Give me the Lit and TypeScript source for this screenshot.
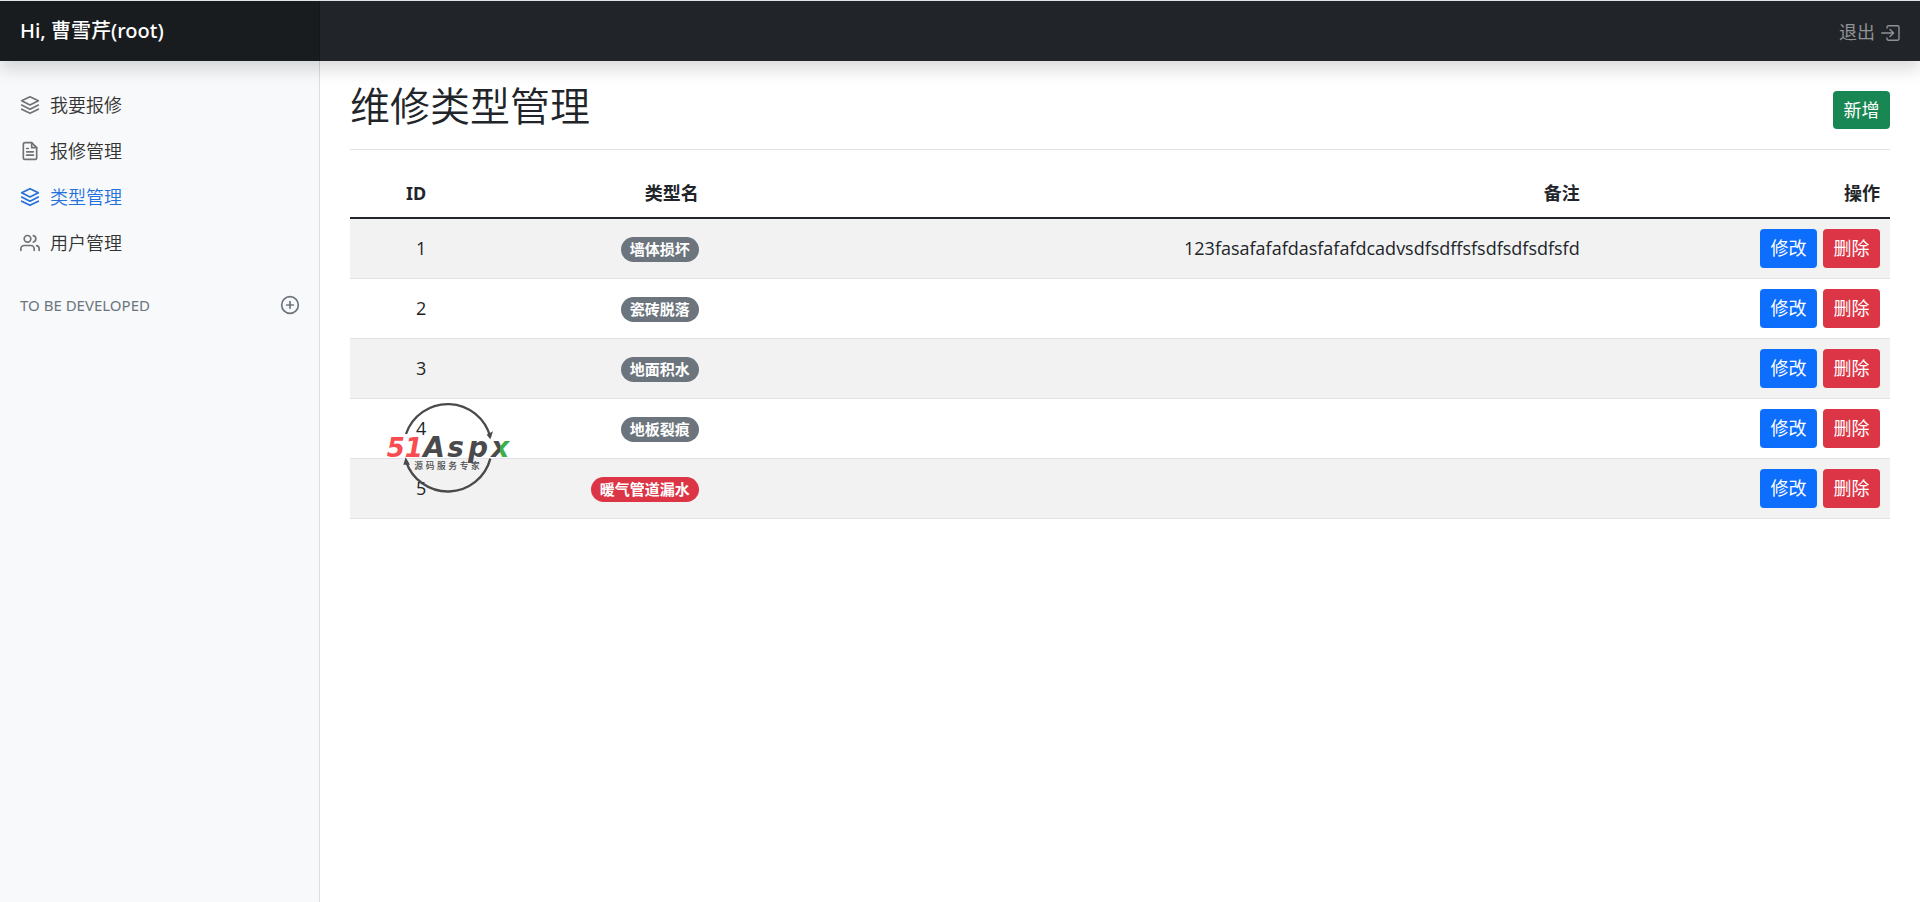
import { LitElement, html, css, svg } from "lit";
import { customElement } from "lit/decorators.js";

const ICONS = {
  layers: svg`<polygon points="12 2 2 7 12 12 22 7 12 2"></polygon><polyline points="2 17 12 22 22 17"></polyline><polyline points="2 12 12 17 22 12"></polyline>`,
  file: svg`<path d="M14 2H6a2 2 0 0 0-2 2v16a2 2 0 0 0 2 2h12a2 2 0 0 0 2-2V8z"></path><polyline points="14 2 14 8 20 8"></polyline><line x1="16" y1="13" x2="8" y2="13"></line><line x1="16" y1="17" x2="8" y2="17"></line><polyline points="10 9 9 9 8 9"></polyline>`,
  users: svg`<path d="M17 21v-2a4 4 0 0 0-4-4H5a4 4 0 0 0-4 4v2"></path><circle cx="9" cy="7" r="4"></circle><path d="M23 21v-2a4 4 0 0 0-3-3.87"></path><path d="M16 3.13a4 4 0 0 1 0 7.75"></path>`,
  plus: svg`<circle cx="12" cy="12" r="10"></circle><line x1="12" y1="8" x2="12" y2="16"></line><line x1="8" y1="12" x2="16" y2="12"></line>`,
};

type IconName = keyof typeof ICONS;

const NAV: { icon: IconName; label: string; active?: boolean }[] = [
  { icon: "layers", label: "我要报修" },
  { icon: "file", label: "报修管理" },
  { icon: "layers", label: "类型管理", active: true },
  { icon: "users", label: "用户管理" },
];

const ROWS = [
  { id: 1, name: "墙体损坏", note: "123fasafafafdasfafafdcadvsdfsdffsfsdfsdfsdfsfd" },
  { id: 2, name: "瓷砖脱落", note: "" },
  { id: 3, name: "地面积水", note: "" },
  { id: 4, name: "地板裂痕", note: "" },
  { id: 5, name: "暖气管道漏水", note: "", urgent: true },
];

@customElement("app-root")
export class AppRoot extends LitElement {
  static styles = css`
    :host {
      display: flex;
      flex-direction: column;
      min-height: 100vh;
      position: relative;
      background: #fff;
      color: #212529;
      font: 18px/27px "Noto Sans", "Noto Sans CJK SC", sans-serif;
    }
    *, *::before, *::after { box-sizing: border-box; }
    a { text-decoration: none; }
    .icon {
      width: 20px;
      height: 20px;
      flex: none;
      fill: none;
      stroke: currentColor;
      stroke-width: 2;
      stroke-linecap: round;
      stroke-linejoin: round;
    }
    .topbar {
      display: flex;
      align-items: stretch;
      height: 61px;
      border-top: 1px solid #dfe7e6;
      background: #212529;
      box-shadow: 0 8px 16px rgba(0, 0, 0, 0.15);
      z-index: 2;
    }
    .brand {
      width: 16.6667%;
      padding: 16px 20px;
      font-size: 20px;
      font-weight: 500;
      line-height: 27px;
      color: #fff;
      background: #191c1f;
      border-right: 1px solid #141619;
    }
    .logout {
      display: flex;
      align-items: center;
      gap: 6px;
      margin-left: auto;
      padding: 2px 20px 0 0;
      color: #909294;
    }
    .exit {
      width: 19px;
      height: 16px;
      margin-top: 2px;
      fill: none;
      stroke: currentColor;
      stroke-linecap: round;
      stroke-linejoin: round;
    }
    .body { display: flex; flex: 1; }
    .sidebar {
      width: 16.6667%;
      padding: 21px 0;
      background: #f8f9fa;
      border-right: 1px solid #dcdddf;
    }
    .nav { list-style: none; margin: 0; padding: 0; }
    .link {
      display: flex;
      align-items: center;
      gap: 10px;
      padding: 10px 20px;
      font-weight: 350;
      line-height: 26px;
      color: #333;
    }
    .link .icon { color: #727272; }
    .link.active, .link.active .icon { color: #2470dc; }
    .section {
      display: flex;
      align-items: center;
      justify-content: space-between;
      margin: 28px 0 0;
      padding: 0 19px 0 20px;
      font-size: 15px;
      font-weight: 400;
      line-height: 22px;
      color: #6c757d;
    }
    .section a { display: flex; color: inherit; }
    .main { flex: 1; min-width: 0; padding: 20px 30px; }
    .head {
      display: flex;
      align-items: center;
      justify-content: space-between;
      padding-bottom: 14px;
      margin-bottom: 20px;
      border-bottom: 1px solid #dee2e6;
    }
    h1 {
      margin: 0;
      padding-bottom: 4px;
      font-size: 40px;
      line-height: 50px;
      font-weight: 350;
    }
    button {
      height: 39px;
      min-width: 57px;
      padding: 0 10px;
      border: 0;
      border-radius: 4px;
      font: inherit;
      line-height: 27px;
      color: #fff;
      background: #0d6efd;
      cursor: pointer;
    }
    .add { height: 38px; margin-top: 4px; background: #198754; }
    .del { background: #dc3545; }
    table { width: 100%; border-collapse: collapse; table-layout: fixed; }
    th, td { padding: 10px; text-align: right; vertical-align: middle; }
    th { font-weight: 700; border-bottom: 2px solid #212529; }
    td {
      height: 60px;
      border-bottom: 1px solid #dee2e6;
      font-family: "Open Sans", "Noto Sans CJK SC", sans-serif;
    }
    tbody tr:nth-child(odd) { background: #f2f2f2; }
    .c-id { width: 5.6%; }
    .c-name { width: 17.7%; }
    .c-act { width: 19.5%; }
    .actions { display: flex; justify-content: flex-end; gap: 6px; }
    .badge {
      display: inline-block;
      padding: 0 9px;
      border-radius: 13px;
      font-size: 15px;
      font-weight: 700;
      line-height: 25px;
      vertical-align: middle;
      color: #fff;
      background: #6c757d;
    }
    .badge.urgent { background: #dc3545; }
    .mark {
      position: absolute;
      left: 380px;
      top: 398px;
      width: 140px;
      height: 100px;
      pointer-events: none;
    }
    .ring { fill: none; stroke: #4a4a4c; stroke-width: 7; }
    .dark { fill: #4a4a4c; }
    .red { fill: #f94c50; }
    .logo { font: italic 700 78px "DejaVu Sans", sans-serif; }
    .letters { font-size: 84px; }
    .slogan { font: 500 26px "Noto Sans CJK SC", sans-serif; }
  `;

  private icon(name: IconName) {
    return html`<svg class="icon" viewBox="0 0 24 24" aria-hidden="true">${ICONS[name]}</svg>`;
  }

  private watermark() {
    return html`<svg class="mark" viewBox="0 0 420 300">
      <defs>
        <linearGradient id="cross">
          <stop offset="0.5" stop-color="#4a4a4c"></stop>
          <stop offset="0.5" stop-color="#3fae49"></stop>
        </linearGradient>
      </defs>
      <path class="ring" d="M78 108A132 132 0 0 1 331 118M331 182A132 132 0 0 1 78 190"></path>
      <path class="dark" d="M320 110L339 100L331 124ZM70 200L77 178L90 200Z"></path>
      <text class="logo red" x="20" y="176">51</text>
      <text class="logo letters dark"><tspan x="130" y="176">A</tspan><tspan x="202" y="176">s</tspan><tspan x="264" y="176">p</tspan></text>
      <text class="logo letters" fill="url(#cross)" x="334" y="176">x</text>
      <text class="slogan dark" x="103 137 171 205 239 273" y="213">源码服务专家</text>
    </svg>`;
  }

  render() {
    return html`
      <header class="topbar">
        <a class="brand" href="#">Hi, 曹雪芹(root)</a>
        <a class="logout" href="#">退出
          <svg class="exit" viewBox="0 0 19 16" aria-hidden="true">
            <path stroke-width="1.4" d="M6 3V2.2A1.4 1.4 0 0 1 7.4 .8H16.6A1.4 1.4 0 0 1 18 2.2V13.8A1.4 1.4 0 0 1 16.6 15.2H7.4A1.4 1.4 0 0 1 6 13.8V13"></path>
            <path stroke-width="1.4" d="M.8 8H12.4M9 4.4L12.6 8L9 11.6"></path>
          </svg>
        </a>
      </header>
      <div class="body">
        <nav class="sidebar">
          <ul class="nav">
            ${NAV.map((n) => html`<li><a class="link ${n.active ? "active" : ""}" href="#">${this.icon(n.icon)}<span>${n.label}</span></a></li>`)}
          </ul>
          <h6 class="section"><span>TO BE DEVELOPED</span><a href="#" aria-label="Add">${this.icon("plus")}</a></h6>
        </nav>
        <main class="main">
          <div class="head"><h1>维修类型管理</h1><button class="add">新增</button></div>
          <table>
            <thead><tr><th class="c-id">ID</th><th class="c-name">类型名</th><th>备注</th><th class="c-act">操作</th></tr></thead>
            <tbody>
              ${ROWS.map((r) => html`<tr>
                <td>${r.id}</td>
                <td><span class="badge ${r.urgent ? "urgent" : ""}">${r.name}</span></td>
                <td>${r.note}</td>
                <td><div class="actions"><button>修改</button><button class="del">删除</button></div></td>
              </tr>`)}
            </tbody>
          </table>
        </main>
      </div>
      ${this.watermark()}
    `;
  }
}
